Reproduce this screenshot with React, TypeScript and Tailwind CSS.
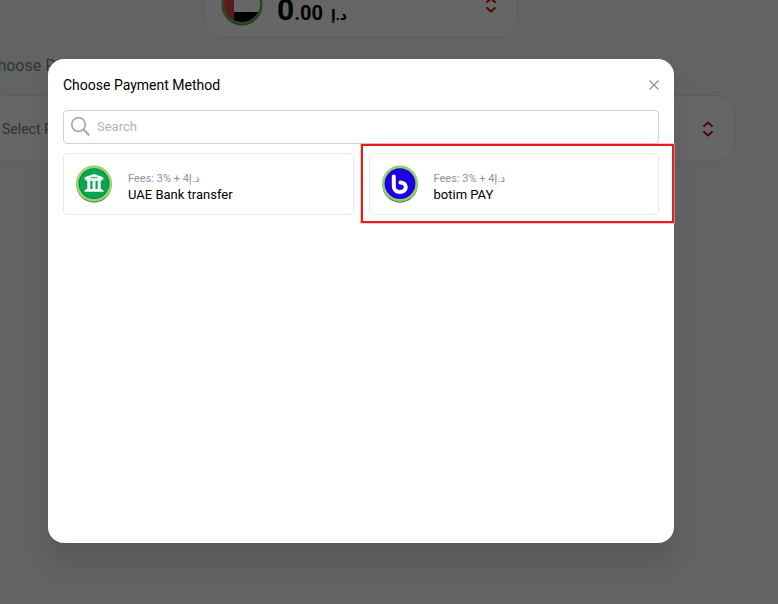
import React from 'react';

type Method = {
  id: string;
  name: string;
  fees: string;
  icon: React.ReactNode;
  selected?: boolean;
};

const BankIcon: React.FC = () => (
  <svg className="h-[38px] w-9 shrink-0" viewBox="0 0 36 38" aria-hidden="true">
    <circle cx="18" cy="20" r="17.7" fill="#609451" />
    <circle cx="18" cy="18.4" r="18" fill="#99d46c" />
    <circle cx="18" cy="18.6" r="15.4" fill="#07824a" />
    <circle cx="18" cy="18.6" r="14.4" fill="#08a652" />
    <g fill="#fff">
      <path d="M18 9 27.3 12.2v2.6H8.7v-2.6z" />
      <path d="M11.3 16h3v8.6h-3zM16.5 16h3v8.6h-3zM21.7 16h3v8.6h-3z" />
      <path d="M10.3 14.5h5v1.6h-5zM15.5 14.5h5v1.6h-5zM20.7 14.5h5v1.6h-5zM9.8 24h16.4v1.2H9.8zM8.5 25.2h19v1.6h-19z" />
    </g>
    <path d="M14.5 12.5h7" stroke="#4fbd82" strokeWidth="1.4" />
  </svg>
);

const BotimIcon: React.FC = () => (
  <svg className="h-[38px] w-9 shrink-0" viewBox="0 0 36 38" aria-hidden="true">
    <circle cx="18" cy="20" r="17.7" fill="#5e8454" />
    <circle cx="18" cy="18.4" r="18" fill="#94cf6c" />
    <circle cx="18" cy="18.6" r="15.4" fill="#1c00e0" />
    <path
      d="M11.8 11.6v9.6c0 3.6 2.5 5.8 6 5.8s6-2 6-4.9c0-2.8-2.3-4.7-5.4-4.7"
      fill="none"
      stroke="#fff"
      strokeWidth="4"
      strokeLinecap="round"
      strokeLinejoin="round"
    />
  </svg>
);

const FlagIcon: React.FC = () => (
  <svg className="size-[42px] shrink-0" viewBox="0 0 42 42" aria-hidden="true">
    <defs>
      <clipPath id="flag">
        <circle cx="21" cy="20" r="18" />
      </clipPath>
    </defs>
    <circle cx="21" cy="21" r="20.5" fill="#5f9150" />
    <circle cx="21" cy="20" r="20" fill="#70b550" />
    <g clipPath="url(#flag)">
      <path d="M0 0h42v42H0z" fill="#fff" />
      <path d="M0 0h42v13H0z" fill="#159447" />
      <path d="M0 28h42v14H0z" fill="#000" />
      <path d="M0 0h13v42H0z" fill="#dc4747" />
    </g>
  </svg>
);

const UpDownIcon: React.FC = () => (
  <svg className="h-4 w-3 shrink-0" viewBox="0 0 12 16" fill="none" stroke="#e00008" strokeWidth="2" aria-hidden="true">
    <path d="m1.5 5.5 4.5-4 4.5 4M1.5 10.5l4.5 4 4.5-4" />
  </svg>
);

const methods: Method[] = [
  { id: 'bank', name: 'UAE Bank transfer', fees: '3% + 4د.إ', icon: <BankIcon /> },
  { id: 'botim', name: 'botim PAY', fees: '3% + 4د.إ', icon: <BotimIcon />, selected: true },
];

const MethodCard: React.FC<{ method: Method }> = ({ method }) => (
  <div className="relative">
    <button
      type="button"
      className="flex h-[62px] w-full items-center gap-4 rounded border border-[#e8eaed] bg-white px-3 text-left"
    >
      {method.icon}
      <span className="flex flex-col pt-1.5">
        <span className="text-[11px] leading-4 text-[#8b929d]">Fees: {method.fees}</span>
        <span className="text-[13px] leading-4 text-black">{method.name}</span>
      </span>
    </button>
    {method.selected && (
      <div className="pointer-events-none absolute -top-[9px] -right-[15px] -bottom-2 -left-2 border-2 border-[#e91d1d] outline outline-[#f3a6a6]/60" />
    )}
  </div>
);

const PaymentDialog: React.FC = () => (
  <div
    role="dialog"
    aria-labelledby="dialog-title"
    className="w-full rounded-2xl bg-white px-[15px] shadow-[0_20px_25px_rgba(0,0,0,0.1)]"
  >
    <div className="flex h-[51px] items-center justify-between">
      <h2 id="dialog-title" className="text-sm leading-6 text-black">Choose Payment Method</h2>
      <button type="button" aria-label="Close" className="flex size-[10px] items-center justify-center">
        <svg className="size-[10px]" viewBox="0 0 10 10" stroke="#8a8f94" strokeWidth="1.2" aria-hidden="true">
          <path d="m.5.5 9 9M9.5.5l-9 9" />
        </svg>
      </button>
    </div>
    <label className="flex h-[34px] items-center gap-[7px] rounded border border-[#cdd1d9] px-[6px]">
      <svg className="size-5 shrink-0" viewBox="0 0 20 20" fill="none" stroke="#a5abb4" strokeWidth="1.8" aria-hidden="true">
        <circle cx="8.5" cy="7.5" r="6.8" />
        <path d="m13.4 12.4 6 6" strokeWidth="2.2" />
      </svg>
      <input
        type="text"
        aria-label="Search"
        placeholder="Search"
        className="min-w-0 flex-1 text-[13px] text-black outline-none placeholder:text-[#adb3bc]"
      />
    </label>
    <div className="mt-[9px] grid grid-cols-2 gap-[15px]">
      {methods.map((method) => (
        <MethodCard key={method.id} method={method} />
      ))}
    </div>
  </div>
);

const App: React.FC = () => {
  return (
    <div className="relative h-screen overflow-hidden bg-[#f6faf8] font-['Roboto','DejaVu_Sans',sans-serif]">
      <main className="flex flex-col pr-14">
        <button
          type="button"
          className="-mt-7 flex h-[66px] w-[314px] items-center self-center rounded-[20px] border border-[#e4e8e6] bg-white pr-5 pl-4"
        >
          <FlagIcon />
          <span className="ml-3.5 pt-2 font-bold text-black">
            <span className="text-[30px]">0</span>
            <span className="text-xl">.00</span>
            <span className="ml-2 text-sm">د.إ</span>
          </span>
          <span className="ml-auto">
            <UpDownIcon />
          </span>
        </button>
        <div className="-mx-[13px] mt-4">
          <p className="text-base leading-6 text-[#7b8185]">Choose Payment Method</p>
          <button
            type="button"
            className="mt-[17px] flex h-[67px] w-full items-center justify-between rounded-[20px] border border-[#e4e8e6] bg-white pr-5 pl-[14px] text-sm text-[#7b8185]"
          >
            Select Payment Method
            <UpDownIcon />
          </button>
        </div>
      </main>
      <div className="absolute inset-0 flex bg-black/60 pt-[59px] pr-[104px] pb-[61px] pl-12">
        <PaymentDialog />
      </div>
    </div>
  );
};

export default App;
